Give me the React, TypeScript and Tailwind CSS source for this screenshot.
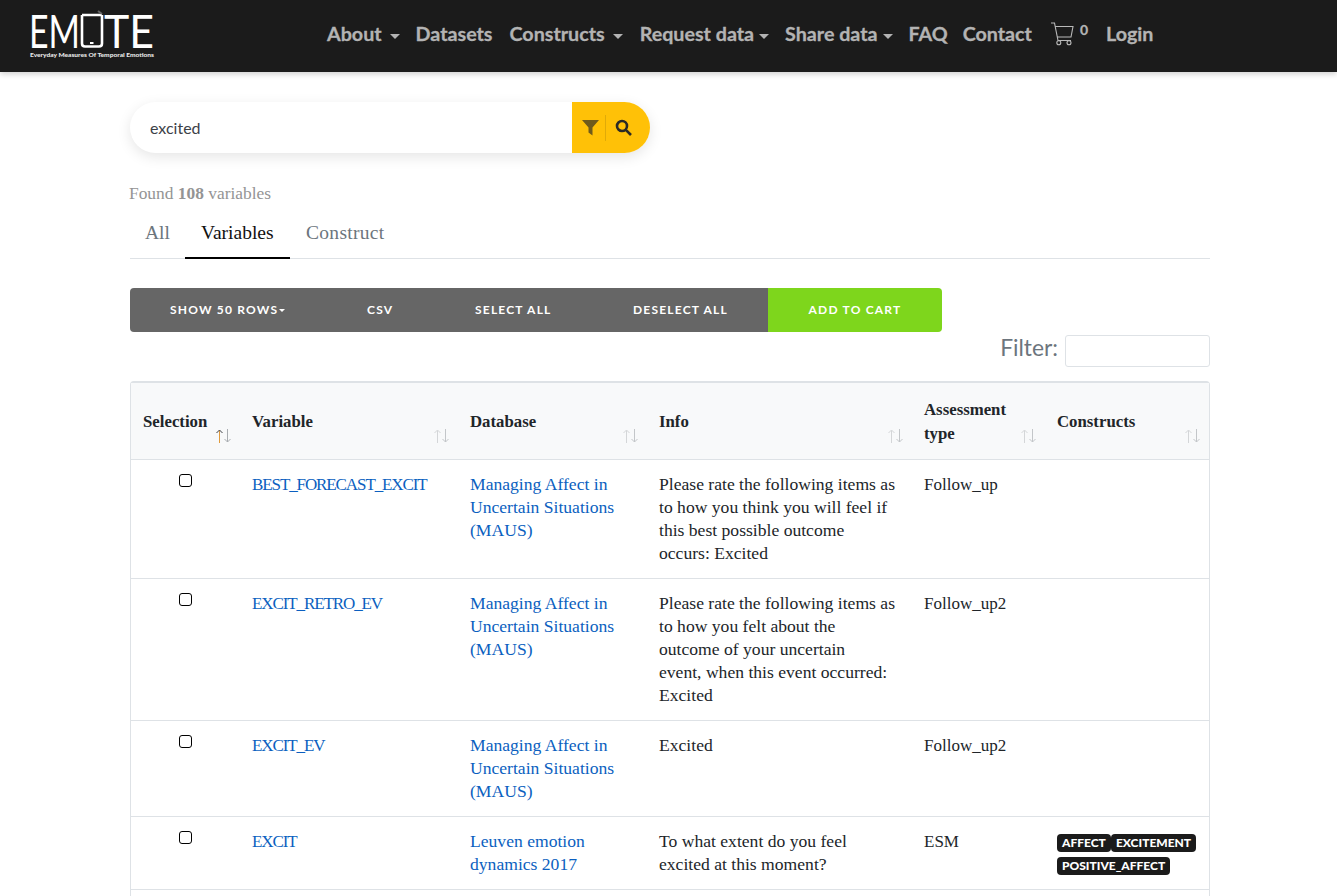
import React from "react";

const serif = "font-['Liberation_Serif',serif]";

function Sort({ active = false }: { active?: boolean }) {
  return (
    <svg width="17" height="14" viewBox="0 0 17 14" className="absolute right-[8px] bottom-[16px]" fill="none" strokeWidth="1">
      <path d="M4.5 14V1.5" stroke={active ? "#e09b3d" : "#d4d6d8"} />
      <path d="M1.5 4L4.5 1L7.5 4" stroke={active ? "#3d3f44" : "#d4d6d8"} />
      <path d="M12.5 0V13M9.5 10L12.5 13L15.5 10" stroke={active ? "#a9adb1" : "#c3c6c9"} />
    </svg>
  );
}

function Logo() {
  return (
    <svg width="128" height="50" viewBox="0 0 128 50" className="block overflow-visible">
      <text x="0" y="37" textLength="51" lengthAdjust="spacingAndGlyphs" fontFamily="Lato, sans-serif" fontWeight="400" fontSize="46" fill="#fff">EM</text>
      <path d="M53 4V32.5Q53 35.5 56 35.5H70Q73 35.5 73 32.5V4M53 4H73" fill="none" stroke="#fff" strokeWidth="2.6" />
      <rect x="61" y="31" width="3.5" height="2" fill="#fff" />
      <path d="M69 0l4 3" stroke="#666" strokeWidth="2" />
      <text x="75" y="37" textLength="50" lengthAdjust="spacingAndGlyphs" fontFamily="Lato, sans-serif" fontWeight="400" fontSize="46" fill="#fff">TE</text>
      <text x="1" y="46" textLength="124" lengthAdjust="spacingAndGlyphs" fontFamily="Lato, sans-serif" fontWeight="900" fontSize="6.2" fill="#e8e8e8">Everyday Measures Of Temporal Emotions</text>
    </svg>
  );
}

function NavItem({ label, caret = 0, className = "" }: { label: string; caret?: number; className?: string }) {
  return (
    <span className={`whitespace-nowrap ${className}`}>
      {label}
      {caret === 8 && <span className="ml-[8px] inline-block align-middle border-x-[5px] border-t-[5px] border-x-transparent border-t-[#b3b3b3]" />}
      {caret === 5 && <span className="ml-[5px] inline-block align-middle border-x-[5px] border-t-[5px] border-x-transparent border-t-[#b3b3b3]" />}
    </span>
  );
}

function Cart() {
  return (
    <svg width="24" height="24" viewBox="0 0 24 24" fill="none" stroke="#b9b9b9" strokeWidth="1.1">
      <path d="M1 1H4.5L8 18.5H21" />
      <path d="M5 4.5H23L21 15H7" />
      <circle cx="8.8" cy="20.7" r="2" />
      <circle cx="19" cy="20.7" r="2" />
    </svg>
  );
}

function Tag({ children }: { children: React.ReactNode }) {
  return (
    <span className="inline-block h-[18px] rounded-[4px] bg-[#1b1b1b] px-[5px] text-[12px] leading-[18px] font-black text-white font-['Lato',sans-serif]">
      {children}
    </span>
  );
}

function Th({ children, active = false }: { children: React.ReactNode; active?: boolean }) {
  return (
    <th className="relative border-b border-[#dee2e6] pl-[12px] pr-[24px] pt-[2px] align-middle text-left text-[16.8px] leading-[23.5px] font-bold text-[#212529]">
      {children}
      <Sort active={active} />
    </th>
  );
}

type Row = { h: string; v: string; db: string[]; info: string[]; type: string; tags?: boolean };

const maus = ["Managing Affect in", "Uncertain Situations", "(MAUS)"];

const rows: Row[] = [
  { h: "h-[119px]", v: "BEST_FORECAST_EXCIT", db: maus, info: ["Please rate the following items as", "to how you think you will feel if", "this best possible outcome", "occurs: Excited"], type: "Follow_up" },
  { h: "h-[142px]", v: "EXCIT_RETRO_EV", db: maus, info: ["Please rate the following items as", "to how you felt about the", "outcome of your uncertain", "event, when this event occurred:", "Excited"], type: "Follow_up2" },
  { h: "h-[96px]", v: "EXCIT_EV", db: maus, info: ["Excited"], type: "Follow_up2" },
  { h: "h-[73px]", v: "EXCIT", db: ["Leuven emotion", "dynamics 2017"], info: ["To what extent do you feel", "excited at this moment?"], type: "ESM", tags: true },
];

function Lines({ lines }: { lines: string[] }) {
  return (
    <>
      {lines.map((l) => (
        <span key={l} className="block whitespace-nowrap">{l}</span>
      ))}
    </>
  );
}

export default function App() {
  return (
    <div className={`h-[896px] overflow-hidden bg-white ${serif}`}>
      <header className="flex h-[72px] items-center bg-[#1b1b1b] pl-[29px] shadow-[0_2px_6px_rgba(0,0,0,0.2)] font-['Lato',sans-serif] text-[19.7px] font-bold text-[#b3b3b3] [-webkit-text-stroke:0.3px_#b3b3b3]">
        <div className="w-[298px] [-webkit-text-stroke:0]">
          <Logo />
        </div>
        <div className="mb-[4px] flex items-center">
          <NavItem label="About" caret={8} className="mr-[16px]" />
          <NavItem label="Datasets" className="mr-[17px]" />
          <NavItem label="Constructs" caret={8} className="mr-[17px]" />
          <NavItem label="Request data" caret={5} className="mr-[16px]" />
          <NavItem label="Share data" caret={5} className="mr-[16px]" />
          <NavItem label="FAQ" className="mr-[15px]" />
          <NavItem label="Contact" className="mr-[18px]" />
          <Cart />
          <span className="mb-[10px] ml-[6px] mr-[18px] text-[14px]">0</span>
          <NavItem label="Login" />
        </div>
      </header>

      <main className="ml-[130px] w-[1080px]">
        <div className="mt-[30px] flex h-[51px] w-[520px] overflow-hidden rounded-full bg-white shadow-[0_4px_14px_rgba(0,0,0,0.1)]">
          <div className="flex flex-1 items-center pl-[20px] pt-[1px] font-['Lato',sans-serif] text-[16px] text-[#3c4148]">excited</div>
          <div className="flex w-[78px] items-center bg-[#ffc107] pl-[10px]">
            <svg width="17" height="17" viewBox="0 0 17 17" fill="#6f5a1c">
              <path d="M0 1H17L10.5 8.5V16.5L6.5 13.5V8.5Z" />
            </svg>
            <span className="ml-[6px] mr-[9px] h-[26px] w-px bg-[#e0aa08]" />
            <svg width="17" height="17" viewBox="0 0 17 17" fill="none" stroke="#2b2a26" strokeWidth="2.6">
              <circle cx="7" cy="7" r="5" />
              <path d="M10.8 10.8L16 16" />
            </svg>
          </div>
        </div>

        <p className="mt-[30px] -ml-px text-[17.4px] leading-[20px] text-[#949494]">
          Found <b>108</b> variables
        </p>

        <nav className="mt-[10px] flex h-[46px] border-b border-[#dee2e6] text-[19.5px] leading-[24px] text-[#6c757d]">
          <span className="h-[46px] w-[55px] pl-[15px] pt-[8px]">All</span>
          <span className="h-[46px] w-[105px] border-b-2 border-black pl-[16px] pt-[8px] text-[#111]">Variables</span>
          <span className="h-[46px] pl-[16px] pt-[8px] tracking-[0.3px]">Construct</span>
        </nav>

        <div className="mt-[29px] flex h-[44px] w-[812px] font-['Lato',sans-serif] text-[12px] font-bold tracking-[1.2px] text-white">
          <div className="flex flex-1 items-center rounded-l-[4px] bg-[#666666]">
            <span className="ml-[40px] w-[197px]">
              SHOW 50 ROWS
              <span className="ml-[1px] inline-block align-middle border-x-[3px] border-t-[3px] border-x-transparent border-t-white" />
            </span>
            <span className="w-[108px]">CSV</span>
            <span className="w-[158px]">SELECT ALL</span>
            <span>DESELECT ALL</span>
          </div>
          <div className="flex w-[174px] items-center justify-center rounded-r-[4px] bg-[#7ed61c]">ADD TO CART</div>
        </div>

        <div className="mt-[3px] flex h-[32px] items-center justify-end">
          <span className="mb-[8px] mr-[7px] font-['Lato',sans-serif] text-[22.8px] text-[#6c757d]">Filter:</span>
          <span className="h-[32px] w-[145px] rounded-[3px] border border-[#dee2e6] bg-white" />
        </div>

        <div className="mt-[14px] h-[600px] rounded-t-[4px] border border-t-2 border-[#dee2e6]">
          <table className="w-full table-fixed border-collapse text-[17.6px] leading-[23.2px] text-[#212529]">
            <colgroup>
              <col className="w-[109px]" />
              <col className="w-[218px]" />
              <col className="w-[189px]" />
              <col className="w-[265px]" />
              <col className="w-[133px]" />
              <col />
            </colgroup>
            <thead>
              <tr className="h-[76px] bg-[#f8f9fa]">
                <Th active>Selection</Th>
                <Th>Variable</Th>
                <Th>Database</Th>
                <Th>Info</Th>
                <Th>Assessment type</Th>
                <Th>Constructs</Th>
              </tr>
            </thead>
            <tbody>
              {rows.map((r) => (
                <tr key={r.v} className={`${r.h} border-b border-[#dee2e6] align-top`}>
                  <td className="pt-[12px] text-center">
                    <span className="mx-auto mt-[2px] block h-[13px] w-[13px] rounded-[3px] border border-black bg-white" />
                  </td>
                  <td className="px-[12px] pt-[13px] text-[#0b5fc0] tracking-[-1.1px] text-[17px]">{r.v}</td>
                  <td className="px-[12px] pt-[13px] text-[#0b5fc0]"><Lines lines={r.db} /></td>
                  <td className="px-[12px] pt-[13px]"><Lines lines={r.info} /></td>
                  <td className="px-[12px] pt-[13px] text-[17px]">{r.type}</td>
                  <td className="px-[12px] pt-[17px]">
                    {r.tags && (
                      <div className="flex flex-wrap gap-y-[5px]">
                        <Tag>AFFECT</Tag>
                        <Tag>EXCITEMENT</Tag>
                        <Tag>POSITIVE_AFFECT</Tag>
                      </div>
                    )}
                  </td>
                </tr>
              ))}
            </tbody>
          </table>
        </div>
      </main>
    </div>
  );
}
